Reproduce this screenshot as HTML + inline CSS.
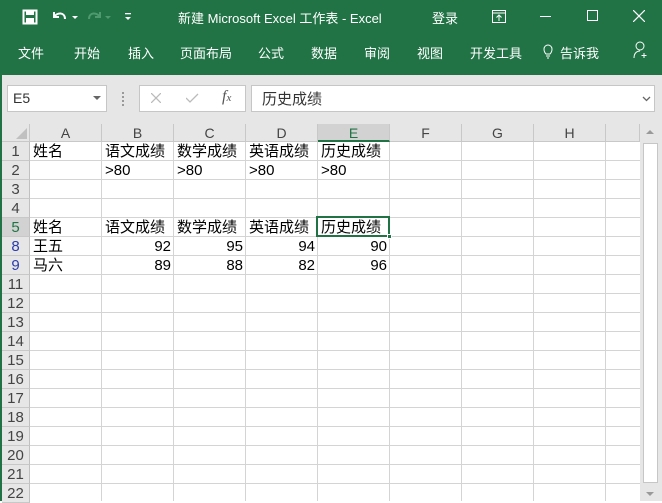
<!DOCTYPE html>
<html><head><meta charset="utf-8"><style>
*{margin:0;padding:0;box-sizing:border-box}
body{width:662px;height:501px;overflow:hidden;background:#fff;font-family:"Liberation Sans","Noto Sans CJK SC",sans-serif;position:relative}
.abs{position:absolute}
.top{left:0;top:0;width:662px;height:75px;background:#217346;color:#fff}
.t{position:absolute;font-size:13px;color:#fff;white-space:nowrap}
.gray{left:0;top:75px;width:662px;height:426px;background:#e6e6e6;border-left:2px solid #217346}
.box{background:#fff;border:1px solid #c6c6c6;position:absolute}
.grid{left:2px;top:124px;width:638px;height:377px;background:#fff}
.ch{position:absolute;top:124px;height:18px;background:#e6e6e6;border-right:1px solid #c8c8c8;border-bottom:1px solid #c8c8c8;font-size:14px;color:#444;text-align:center;line-height:18px}
.rh{position:absolute;left:2px;width:28px;height:19px;background:#e6e6e6;border-bottom:1px solid #c8c8c8;border-right:1px solid #c0c0c0;font-size:15px;color:#444;text-align:center;line-height:19px}
.vl{position:absolute;top:142px;width:1px;height:359px;background:#d4d4d4}
.hl{position:absolute;left:30px;width:610px;height:1px;background:#d4d4d4}
.c{position:absolute;font-size:15px;color:#000;line-height:19px;white-space:nowrap}
.r{text-align:right;width:70px}
</style></head><body>
<div class="abs top"></div>
<svg class="abs" style="left:22px;top:9px" width="16" height="16" viewBox="0 0 16 16"><rect x="1.5" y="1.5" width="13" height="13" fill="none" stroke="#fff" stroke-width="2"/><rect x="4" y="2" width="8" height="4" fill="#fff"/><rect x="4" y="9" width="8" height="5" fill="#fff"/></svg>
<svg class="abs" style="left:51px;top:8px" width="28" height="18" viewBox="0 0 28 18"><path d="M3 4v5h5" fill="none" stroke="#fff" stroke-width="2"/><path d="M3 9c3-5 11-5 11 2" fill="none" stroke="#fff" stroke-width="2"/><path d="M21 8l3 3 3-3z" fill="#fff"/></svg>
<svg class="abs" style="left:86px;top:8px" width="28" height="18" viewBox="0 0 28 18"><path d="M14 4v5h-5M14 9c-3-5-11-5-11 2" fill="none" stroke="#4e9a6e" stroke-width="2"/><path d="M19 8l3 3 3-3z" fill="#4e9a6e"/></svg>
<svg class="abs" style="left:124px;top:12px" width="8" height="10" viewBox="0 0 8 10"><rect x="1" y="1" width="6" height="1.3" fill="#fff"/><path d="M1 5h6l-3 3z" fill="#fff"/></svg>
<div class="t" style="left:178px;top:8px">新建 Microsoft Excel 工作表 - Excel</div>
<div class="t" style="left:432px;top:8px">登录</div>
<svg class="abs" style="left:492px;top:10px" width="14" height="13" viewBox="0 0 14 13"><rect x="0.5" y="0.5" width="13" height="12" fill="none" stroke="#fff"/><path d="M0.5 3h13M7 11V5M4.5 7.5L7 5l2.5 2.5" fill="none" stroke="#fff"/></svg>
<div class="abs" style="left:540px;top:16px;width:11px;height:1px;background:#fff"></div>
<div class="abs" style="left:587px;top:10px;width:11px;height:11px;border:1px solid #fff"></div>
<svg class="abs" style="left:633px;top:10px" width="12" height="12" viewBox="0 0 12 12"><path d="M0 0L12 12M12 0L0 12" stroke="#fff" stroke-width="1.2"/></svg>
<div class="t" style="left:18px;top:43px">文件</div>
<div class="t" style="left:74px;top:43px">开始</div>
<div class="t" style="left:128px;top:43px">插入</div>
<div class="t" style="left:180px;top:43px">页面布局</div>
<div class="t" style="left:258px;top:43px">公式</div>
<div class="t" style="left:311px;top:43px">数据</div>
<div class="t" style="left:364px;top:43px">审阅</div>
<div class="t" style="left:417px;top:43px">视图</div>
<div class="t" style="left:470px;top:43px">开发工具</div>
<svg class="abs" style="left:543px;top:44px" width="10" height="15" viewBox="0 0 10 15"><path d="M3 10C1 8 1 6.5 1 5a4 4 0 0 1 8 0c0 1.5 0 3-2 5zM3 12h4M4 14h2" fill="none" stroke="#fff"/></svg>
<div class="t" style="left:560px;top:43px">告诉我</div>
<svg class="abs" style="left:633px;top:41px" width="16" height="18" viewBox="0 0 16 18"><circle cx="7" cy="5" r="4" fill="none" stroke="#fff"/><path d="M1 17c0-5 3-7 6-7M11 12v5M8.5 14.5h5" fill="none" stroke="#fff"/></svg>
<div class="abs gray"></div>
<div class="box" style="left:7px;top:85px;width:100px;height:27px"></div>
<div class="abs" style="left:13px;top:90px;font-size:14px;color:#333">E5</div>
<svg class="abs" style="left:93px;top:96px" width="8" height="5"><path d="M0 0h8L4 4z" fill="#666"/></svg>
<div class="abs" style="left:122px;top:92px;width:2px;height:14px;background:repeating-linear-gradient(#999 0 2px,transparent 2px 4px)"></div>
<div class="box" style="left:139px;top:85px;width:107px;height:27px"></div>
<svg class="abs" style="left:151px;top:93px" width="10" height="10"><path d="M0 0L10 10M10 0L0 10" stroke="#bbb" stroke-width="1.3"/></svg>
<svg class="abs" style="left:186px;top:93px" width="13" height="10"><path d="M0 5l4 4 8-8" fill="none" stroke="#bbb" stroke-width="1.3"/></svg>
<div class="abs" style="left:222px;top:88px;font-family:'Liberation Serif',serif;font-style:italic;font-size:16px;color:#555">f<span style="font-size:11px">x</span></div>
<div class="box" style="left:251px;top:85px;width:404px;height:27px"></div>
<div class="abs" style="left:262px;top:88px;font-size:15px;color:#333">历史成绩</div>
<svg class="abs" style="left:642px;top:96px" width="9" height="6"><path d="M1 1l3.5 3.5L8 1" fill="none" stroke="#666" stroke-width="1.3"/></svg>
<div class="abs grid"></div>
<div class="abs" style="left:2px;top:124px;width:28px;height:18px;background:#e6e6e6;border-right:1px solid #c8c8c8;border-bottom:1px solid #c8c8c8"></div>
<svg class="abs" style="left:16px;top:128px" width="11" height="11"><path d="M11 0V11H0z" fill="#c0c0c0"/></svg>
<div class="ch" style="left:30px;width:72px">A</div>
<div class="ch" style="left:102px;width:72px">B</div>
<div class="ch" style="left:174px;width:72px">C</div>
<div class="ch" style="left:246px;width:72px">D</div>
<div class="ch" style="left:318px;width:72px;background:#d2d2d2;color:#217346;border-bottom:2px solid #217346">E</div>
<div class="ch" style="left:390px;width:72px">F</div>
<div class="ch" style="left:462px;width:72px">G</div>
<div class="ch" style="left:534px;width:72px">H</div>
<div class="ch" style="left:606px;width:34px"></div>
<div class="vl" style="left:101px"></div><div class="vl" style="left:173px"></div><div class="vl" style="left:245px"></div><div class="vl" style="left:317px"></div><div class="vl" style="left:389px"></div><div class="vl" style="left:461px"></div><div class="vl" style="left:533px"></div><div class="vl" style="left:605px"></div>
<div class="rh" style="top:142px">1</div><div class="hl" style="top:160px"></div>
<div class="rh" style="top:161px">2</div><div class="hl" style="top:179px"></div>
<div class="rh" style="top:180px">3</div><div class="hl" style="top:198px"></div>
<div class="rh" style="top:199px">4</div><div class="hl" style="top:217px"></div>
<div class="rh" style="top:218px;background:#d2d2d2;color:#217346">5</div><div class="hl" style="top:236px"></div>
<div class="rh" style="top:237px;color:#2a3bb0">8</div><div class="hl" style="top:255px"></div>
<div class="rh" style="top:256px;color:#2a3bb0">9</div><div class="hl" style="top:274px"></div>
<div class="rh" style="top:275px">11</div><div class="hl" style="top:293px"></div>
<div class="rh" style="top:294px">12</div><div class="hl" style="top:312px"></div>
<div class="rh" style="top:313px">13</div><div class="hl" style="top:331px"></div>
<div class="rh" style="top:332px">14</div><div class="hl" style="top:350px"></div>
<div class="rh" style="top:351px">15</div><div class="hl" style="top:369px"></div>
<div class="rh" style="top:370px">16</div><div class="hl" style="top:388px"></div>
<div class="rh" style="top:389px">17</div><div class="hl" style="top:407px"></div>
<div class="rh" style="top:408px">18</div><div class="hl" style="top:426px"></div>
<div class="rh" style="top:427px">19</div><div class="hl" style="top:445px"></div>
<div class="rh" style="top:446px">20</div><div class="hl" style="top:464px"></div>
<div class="rh" style="top:465px">21</div><div class="hl" style="top:483px"></div>
<div class="rh" style="top:484px">22</div>
<div class="c" style="left:33px;top:142px">姓名</div><div class="c" style="left:105px;top:142px">语文成绩</div><div class="c" style="left:177px;top:142px">数学成绩</div><div class="c" style="left:249px;top:142px">英语成绩</div><div class="c" style="left:321px;top:142px">历史成绩</div>
<div class="c" style="left:105px;top:161px">&gt;80</div><div class="c" style="left:177px;top:161px">&gt;80</div><div class="c" style="left:249px;top:161px">&gt;80</div><div class="c" style="left:321px;top:161px">&gt;80</div>
<div class="c" style="left:33px;top:218px">姓名</div><div class="c" style="left:105px;top:218px">语文成绩</div><div class="c" style="left:177px;top:218px">数学成绩</div><div class="c" style="left:249px;top:218px">英语成绩</div><div class="c" style="left:321px;top:218px">历史成绩</div>
<div class="c" style="left:33px;top:237px">王五</div><div class="c r" style="left:101px;top:237px">92</div><div class="c r" style="left:173px;top:237px">95</div><div class="c r" style="left:245px;top:237px">94</div><div class="c r" style="left:317px;top:237px">90</div>
<div class="c" style="left:33px;top:256px">马六</div><div class="c r" style="left:101px;top:256px">89</div><div class="c r" style="left:173px;top:256px">88</div><div class="c r" style="left:245px;top:256px">82</div><div class="c r" style="left:317px;top:256px">96</div>
<div class="abs" style="left:316px;top:216px;width:74px;height:21px;border:2px solid #217346"></div>
<div class="abs" style="left:387px;top:234px;width:5px;height:5px;background:#217346;border:1px solid #fff"></div>
<div class="abs" style="left:640px;top:124px;width:22px;height:377px;background:#e6e6e6"></div>
<div class="abs" style="left:643px;top:143px;width:15px;height:340px;background:#fff;border:1px solid #c6c6c6"></div>
<svg class="abs" style="left:645px;top:128px" width="10" height="8"><path d="M1 6h8L5 2z" fill="#999"/></svg>
<svg class="abs" style="left:645px;top:490px" width="10" height="8"><path d="M1 2h8L5 6z" fill="#999"/></svg>
<div class="abs" style="left:102px;top:497px;width:68px;height:4px;background:#fff"></div>
</body></html>
